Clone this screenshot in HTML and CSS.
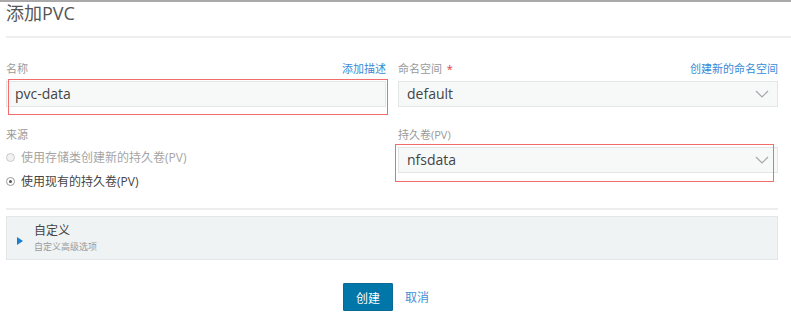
FILE: index.html
```html
<!DOCTYPE html>
<html>
<head>
  <meta charset="UTF-8" />
  <title>添加PVC</title>
  <link rel="stylesheet" href="styles.css">
</head>
<body>
  <div class="page">
    <h1>添加PVC</h1>
    <hr class="sep head-sep">

    <div class="form-grid">
      <div class="field">
        <div class="field-head">
          <span class="label">名称</span>
          <a class="link">添加描述</a>
        </div>
        <div class="input">pvc-data</div>
        <div class="mark mark-name"></div>
      </div>

      <div class="field">
        <div class="field-head">
          <span class="label">命名空间 <span class="req">*</span></span>
          <a class="link">创建新的命名空间</a>
        </div>
        <div class="input select">
          <span>default</span>
          <svg class="chev" width="14" height="8" viewBox="0 0 14 8"><path d="M1 1l6 6 6-6" fill="none" stroke="#a3a8ab" stroke-width="1.2"/></svg>
        </div>
      </div>

      <div class="field">
        <div class="field-head">
          <span class="label">来源</span>
        </div>
        <div class="radios">
          <label class="radio disabled"><span class="dot"></span>使用存储类创建新的持久卷(PV)</label>
          <label class="radio"><span class="dot checked"></span>使用现有的持久卷(PV)</label>
        </div>
      </div>

      <div class="field">
        <div class="field-head">
          <span class="label">持久卷(PV)</span>
        </div>
        <div class="input select">
          <span>nfsdata</span>
          <svg class="chev" width="14" height="8" viewBox="0 0 14 8"><path d="M1 1l6 6 6-6" fill="none" stroke="#a3a8ab" stroke-width="1.2"/></svg>
        </div>
        <div class="mark mark-pv"></div>
      </div>
    </div>

    <hr class="sep foot-sep">

    <div class="panel">
      <span class="caret"></span>
      <div class="panel-text">
        <div class="panel-title">自定义</div>
        <div class="panel-sub">自定义高级选项</div>
      </div>
    </div>

    <div class="actions">
      <button class="btn-primary">创建</button>
      <a class="cancel">取消</a>
    </div>
  </div>
</body>
</html>
```

FILE: styles.css
```css
body {
  margin: 0;
  font-family: "Open Sans", "Noto Sans CJK SC", sans-serif;
  color: #444;
  background: #fff;
  border-top: 2px solid #a9a9a9;
}
.page {
  width: 785px;
  padding-left: 6px;
}
h1 {
  margin: 0;
  margin-top: -2px;
  font-size: 18px;
  font-weight: normal;
  line-height: 26px;
  color: #555;
}
.sep {
  border: none;
  border-top: 2px solid #eceeef;
  margin: 0;
}
.head-sep {
  margin-top: 10px;
}
.foot-sep {
  margin-top: 15px;
  width: 772px;
}
.form-grid {
  width: 772px;
  display: grid;
  grid-template-columns: 380px 380px;
  column-gap: 12px;
  row-gap: 19px;
  margin-top: 22px;
  align-items: start;
}
.field {
  position: relative;
}
.field-head {
  display: flex;
  justify-content: space-between;
  align-items: center;
  height: 16px;
  margin-bottom: 5px;
  font-size: 11px;
}
.label {
  color: #9a9a9a;
}
.req {
  color: #e0393e;
  margin-left: 2px;
}
.link {
  color: #3a8ad6;
  cursor: pointer;
}
.input {
  height: 24px;
  line-height: 24px;
  background: #f7f9f9;
  border: 1px solid #e2e6e6;
  padding-left: 8px;
  font-size: 14px;
  color: #444;
}
.select {
  display: flex;
  justify-content: space-between;
  align-items: center;
  padding-right: 8px;
}
.chev {
  display: block;
}
.mark {
  position: absolute;
  border: 1px solid #f26c6c;
}
.mark-name {
  left: 2px;
  top: 19px;
  width: 378px;
  height: 34px;
}
.mark-pv {
  left: -3px;
  top: 18px;
  width: 377px;
  height: 36px;
}
.radios {
  margin-top: -2px;
}
.radio {
  display: flex;
  align-items: center;
  height: 24px;
  font-size: 12px;
  color: #444;
}
.radio.disabled {
  color: #a5a5a5;
}
.dot {
  width: 7px;
  height: 7px;
  border-radius: 50%;
  border: 1px solid #c9c9c9;
  background: #f2f2f2;
  margin-right: 6px;
  position: relative;
}
.dot.checked {
  border-color: #999;
  background: #fff;
}
.dot.checked::after {
  content: "";
  position: absolute;
  left: 2px;
  top: 2px;
  width: 3px;
  height: 3px;
  border-radius: 50%;
  background: #555;
}
.panel {
  margin-top: 6px;
  width: 770px;
  height: 42px;
  background: #eff3f4;
  border: 1px solid #e3e7e8;
  display: flex;
  align-items: center;
}
.caret {
  width: 0;
  height: 0;
  border-top: 4px solid transparent;
  border-bottom: 4px solid transparent;
  border-left: 6px solid #1b7fd1;
  margin-left: 10px;
  margin-right: 11px;
  margin-top: 6px;
}
.panel-title {
  font-size: 12px;
  color: #444;
  line-height: 15px;
}
.panel-sub {
  font-size: 9px;
  color: #9a9a9a;
  line-height: 14px;
  margin-top: 2px;
}
.actions {
  width: 760px;
  margin-top: 23px;
  display: flex;
  justify-content: center;
  align-items: center;
  gap: 12px;
}
.btn-primary {
  width: 50px;
  height: 28px;
  background: #0176a8;
  border: 1px solid #0a6a95;
  color: #fff;
  font-family: "Noto Sans CJK SC", sans-serif;
  font-size: 12px;
  padding: 0;
  border-radius: 1px;
}
.cancel {
  color: #3f8fd6;
  font-size: 12px;
  cursor: pointer;
}
```
